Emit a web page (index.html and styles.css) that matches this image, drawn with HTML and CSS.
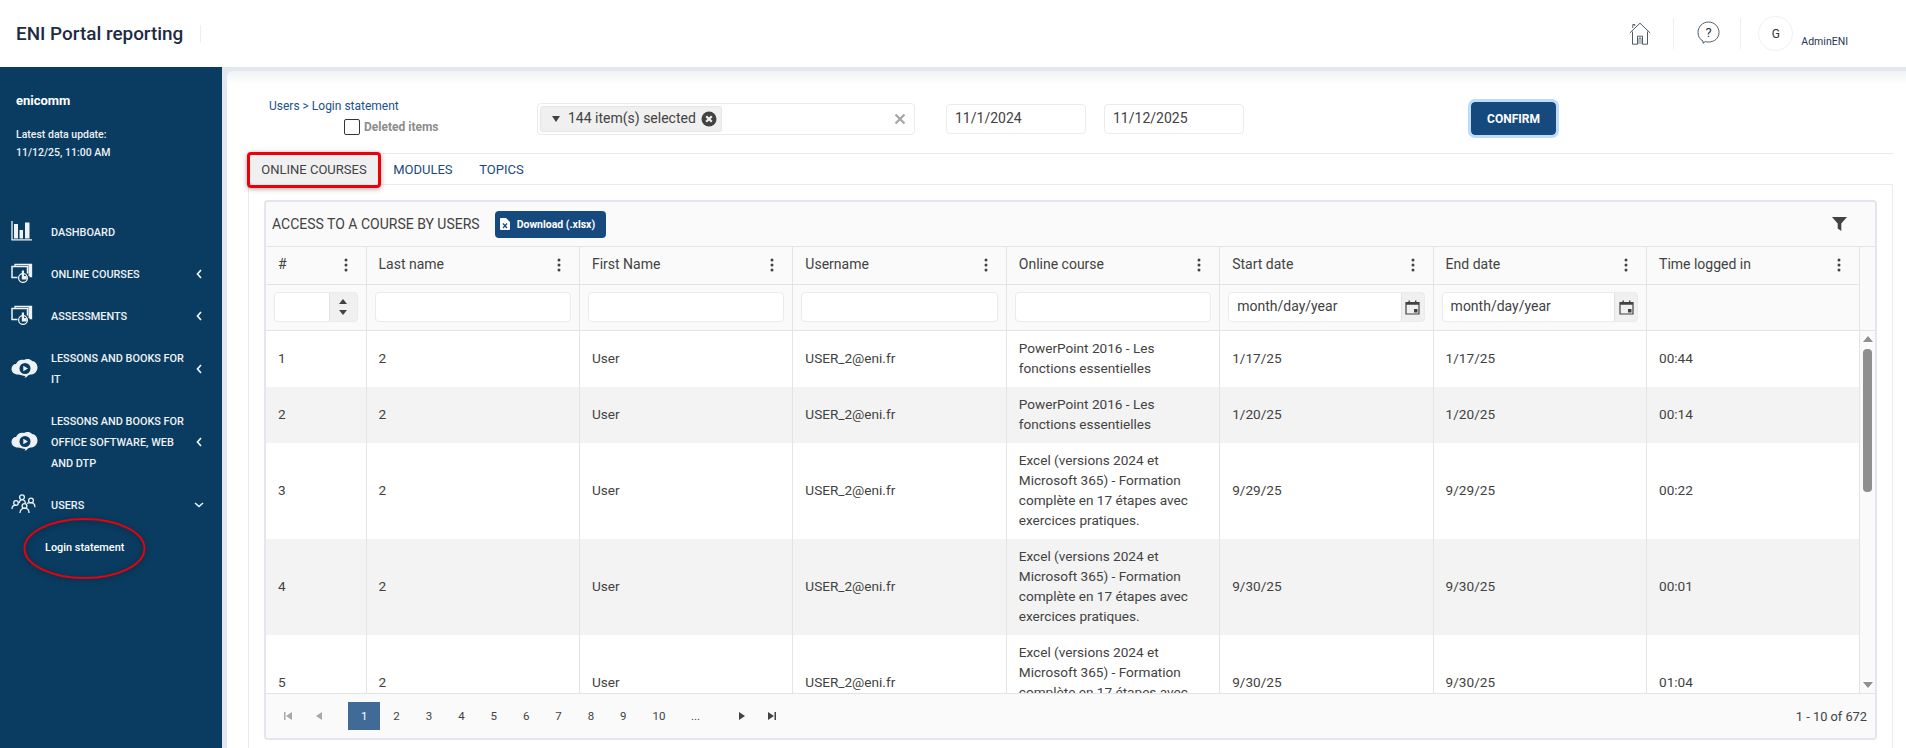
FILE: index.html
```html
<!DOCTYPE html>
<html lang="en">
  <head>
    <meta charset="UTF-8" />
    <title>ENI Portal reporting</title>
    <link rel="stylesheet" href="styles.css">
  </head>
  <body>
    <svg class="defs" width="0" height="0">
      <defs>
        <symbol id="kebab" viewBox="0 0 4 14"><circle cx="2" cy="2" r="1.5"/><circle cx="2" cy="7" r="1.5"/><circle cx="2" cy="12" r="1.5"/></symbol>
        <symbol id="calendar" viewBox="0 0 15 15"><path d="M1 2.500h13v11.500h-13z" fill="none" stroke="currentColor" stroke-width="1.200"/><path d="M1 2.500h13v2.200h-13zM3.500 .5h1.400v3h-1.400zM10 .5h1.400v3h-1.400zM9 9h3.500v3.500H9z"/></symbol>
        <symbol id="chev-left" viewBox="0 0 6 10"><path d="M5 1 1.500 5 5 9" fill="none" stroke="currentColor" stroke-width="1.700"/></symbol>
        <symbol id="course" viewBox="0 0 22 20">
          <path d="M4 3V1.500h16.500v12h-2" fill="none" stroke="currentColor" stroke-width="1.300"/>
          <path d="M17.500 2v11h3V2z" fill="currentColor"/>
          <path d="M6.500 14.500H1v-11h15.500v7" fill="none" stroke="currentColor" stroke-width="1.500"/>
          <circle cx="12" cy="15" r="4.400" fill="#0a3c61" stroke="currentColor" stroke-width="1.300"/>
          <path d="M10.800 7.500h2.200v5.500h2.800v3.500h-5z" fill="currentColor"/>
        </symbol>
        <symbol id="cloud" viewBox="0 0 27 20">
          <path d="M7 16.500C3 16.500 .5 14 .5 11S2.500 6 5 6C6.500 2.500 10 1 13 2c2-1.500 6-1.500 8 1 3 0 5.500 3 5.500 6.500S24 16 20.500 16.500c-1.500 0-3 .5-4 1.500-.5 1-2 1.500-3 1.500l1-1.500C12 18 9 16.500 7 16.500z" fill="currentColor"/>
          <circle cx="14" cy="10.500" r="5.500" fill="#0a3c61"/>
          <path d="M12.300 7.800 17 10.500l-4.700 2.700z" fill="currentColor"/>
        </symbol>
      </defs>
    </svg>

    <header class="topbar">
      <div class="brand">ENI Portal reporting</div>
      <div class="topbar-right">
        <svg class="home-icon" viewBox="0 0 22 23" width="22" height="23">
          <path d="M.8 11 11 1.200 21.200 11M3.500 9.500V22.200h5v-8h5v8h5V9.500M3.800 6V2.500h2V4" fill="none" stroke="#4f5a6c" stroke-width="1"/>
          <path d="M10 22v-6h2v6" fill="none" stroke="#4f5a6c" stroke-width=".8"/>
        </svg>
        <span class="top-divider first"></span>
        <svg class="help-icon" viewBox="0 0 23 23" width="23" height="23">
          <path d="M6 20C2.800 18.500 1 15.300 1 11.500 1 5.700 5.700 1 11.500 1S22 5.700 22 11.500 17.300 21 11.500 21c-1.200 0-2.300-.1-3.300-.4L6 22.300z" fill="none" stroke="#4f5a6c" stroke-width="1"/>
          <text x="11.500" y="15.500" text-anchor="middle">?</text>
        </svg>
        <span class="top-divider second"></span>
        <span class="avatar">G</span>
        <span class="user-name">AdminENI</span>
      </div>
    </header>

    <div class="layout">
      <aside class="sidebar">
        <div class="org">enicomm</div>
        <div class="update">Latest data update:<br>11/12/25, 11:00 AM</div>
        <nav class="nav">
          <a class="nav-item">
            <svg class="nav-icon" viewBox="0 0 22 20" width="22" height="20">
              <path d="M1 0v18.800h20" fill="none" stroke="currentColor" stroke-width="1.300"/>
              <path d="M3 3h4v14.500H3zM8.500 9H12v8.500H8.500zM14 1.500h4.500v16H14z" fill="currentColor"/>
            </svg>
            <span class="nav-label">DASHBOARD</span>
          </a>
          <a class="nav-item">
            <svg class="nav-icon" width="22" height="20"><use href="#course"/></svg>
            <span class="nav-label">ONLINE COURSES</span>
            <svg class="chev" width="6" height="10"><use href="#chev-left"/></svg>
          </a>
          <a class="nav-item">
            <svg class="nav-icon" width="22" height="20"><use href="#course"/></svg>
            <span class="nav-label">ASSESSMENTS</span>
            <svg class="chev" width="6" height="10"><use href="#chev-left"/></svg>
          </a>
          <a class="nav-item">
            <svg class="nav-icon" width="27" height="20"><use href="#cloud"/></svg>
            <span class="nav-label">LESSONS AND BOOKS FOR IT</span>
            <svg class="chev" width="6" height="10"><use href="#chev-left"/></svg>
          </a>
          <a class="nav-item">
            <svg class="nav-icon" width="27" height="20"><use href="#cloud"/></svg>
            <span class="nav-label">LESSONS AND BOOKS FOR OFFICE SOFTWARE, WEB AND DTP</span>
            <svg class="chev" width="6" height="10"><use href="#chev-left"/></svg>
          </a>
          <a class="nav-item">
            <svg class="nav-icon" viewBox="0 0 25 20" width="25" height="20">
              <g fill="none" stroke="currentColor" stroke-width="1.300">
                <circle cx="11" cy="3.200" r="2.400"/><circle cx="5" cy="9" r="2.300"/><circle cx="20" cy="6.500" r="2.400"/><circle cx="13.500" cy="12" r="2.400"/>
                <path d="M1 15c0-2.500 1.500-3.800 4-3.800M8 9c.5-1.800 1.500-3.400 3-3.400s3 1 3.500 3.500M16 9.500c1-.8 2.500-.8 4-.8 2.500 0 3.800 2 4 4.500M9 19c0-3 2-4.800 4.500-4.800S18 16 18 19"/>
              </g>
            </svg>
            <span class="nav-label">USERS</span>
            <svg class="chev down" width="10" height="6" viewBox="0 0 10 6"><path d="M1 1l4 3.500L9 1" fill="none" stroke="currentColor" stroke-width="1.600"/></svg>
          </a>
          <a class="sub-item">Login statement</a>
        </nav>
        <svg class="mark-ellipse" width="125" height="65" viewBox="0 0 125 65">
          <ellipse cx="62.500" cy="32.500" rx="60" ry="29.500"/>
        </svg>
      </aside>

      <div class="main-bg">
        <main class="main">
          <div class="filters">
            <div class="crumb-col">
              <div class="crumb">Users &gt; Login statement</div>
              <label class="deleted"><input type="checkbox" class="check"> Deleted items</label>
            </div>
            <div class="multi">
              <span class="chip">
                <svg class="chip-caret" width="10" height="6" viewBox="0 0 10 6"><path d="M1 0h8L5 6z"/></svg>
                <span class="chip-text">144 item(s) selected</span>
                <svg class="chip-x" width="16" height="16" viewBox="0 0 16 16"><circle cx="8" cy="8" r="7.500"/><path d="M5.200 5.200l5.600 5.600M10.800 5.200l-5.600 5.600"/></svg>
              </span>
              <svg class="multi-x" width="12" height="12" viewBox="0 0 12 12"><path d="M1.500 1.500l9 9M10.500 1.500l-9 9"/></svg>
            </div>
            <input class="date-box first" value="11/1/2024">
            <input class="date-box" value="11/12/2025">
            <button class="confirm">CONFIRM</button>
          </div>

          <div class="tabs">
            <span class="tab active">ONLINE COURSES</span>
            <span class="tab">MODULES</span>
            <span class="tab">TOPICS</span>
            <span class="mark-rect"></span>
          </div>

          <div class="tab-body">
            <section class="grid">
              <div class="toolbar">
                <span class="toolbar-title">ACCESS TO A COURSE BY USERS</span>
                <button class="download">
                  <svg width="10" height="12" viewBox="0 0 10 12"><path d="M0 1a1 1 0 0 1 1-1h5l4 4v7a1 1 0 0 1-1 1H1a1 1 0 0 1-1-1z" fill="#fff"/><path d="M3 5.500l4 4.500M7 5.500l-4 4.500" stroke="#164a7f" stroke-width="1.200"/></svg>
                  Download (.xlsx)
                </button>
                <svg class="funnel" width="15" height="14" viewBox="0 0 15 14"><path d="M0 0h15L9.300 6.500V14L5.700 11.500v-5z"/></svg>
              </div>

              <div class="grid-head">
                <table class="grid-table">
                  <colgroup>
                    <col class="col-num"><col class="col"><col class="col"><col class="col"><col class="col"><col class="col"><col class="col"><col class="col">
                  </colgroup>
                  <tr class="title-row">
                    <th><span>#</span><svg class="kebab" width="4" height="14"><use href="#kebab"/></svg></th>
                    <th><span>Last name</span><svg class="kebab" width="4" height="14"><use href="#kebab"/></svg></th>
                    <th><span>First Name</span><svg class="kebab" width="4" height="14"><use href="#kebab"/></svg></th>
                    <th><span>Username</span><svg class="kebab" width="4" height="14"><use href="#kebab"/></svg></th>
                    <th><span>Online course</span><svg class="kebab" width="4" height="14"><use href="#kebab"/></svg></th>
                    <th><span>Start date</span><svg class="kebab" width="4" height="14"><use href="#kebab"/></svg></th>
                    <th><span>End date</span><svg class="kebab" width="4" height="14"><use href="#kebab"/></svg></th>
                    <th><span>Time logged in</span><svg class="kebab" width="4" height="14"><use href="#kebab"/></svg></th>
                  </tr>
                  <tr class="filter-row">
                    <td>
                      <div class="num-filter">
                        <input class="filter-input">
                        <span class="spin">
                          <svg width="8" height="5" viewBox="0 0 10 6"><path d="M5 0l5 6H0z"/></svg>
                          <svg width="8" height="5" viewBox="0 0 10 6"><path d="M0 0h10L5 6z"/></svg>
                        </span>
                      </div>
                    </td>
                    <td><input class="filter-input"></td>
                    <td><input class="filter-input"></td>
                    <td><input class="filter-input"></td>
                    <td><input class="filter-input"></td>
                    <td>
                      <div class="date-filter">
                        <input class="filter-input" value="month/day/year">
                        <span class="cal"><svg width="15" height="15"><use href="#calendar"/></svg></span>
                      </div>
                    </td>
                    <td>
                      <div class="date-filter">
                        <input class="filter-input" value="month/day/year">
                        <span class="cal"><svg width="15" height="15"><use href="#calendar"/></svg></span>
                      </div>
                    </td>
                    <td></td>
                  </tr>
                </table>
              </div>

              <div class="grid-scroll">
                <div class="grid-body">
                  <table class="grid-table">
                    <colgroup>
                      <col class="col-num"><col class="col"><col class="col"><col class="col"><col class="col"><col class="col"><col class="col"><col class="col">
                    </colgroup>
                    <tr>
                      <td>1</td><td>2</td><td>User</td><td>USER_2@eni.fr</td>
                      <td>PowerPoint 2016 - Les fonctions essentielles</td>
                      <td>1/17/25</td><td>1/17/25</td><td>00:44</td>
                    </tr>
                    <tr class="alt">
                      <td>2</td><td>2</td><td>User</td><td>USER_2@eni.fr</td>
                      <td>PowerPoint 2016 - Les fonctions essentielles</td>
                      <td>1/20/25</td><td>1/20/25</td><td>00:14</td>
                    </tr>
                    <tr>
                      <td>3</td><td>2</td><td>User</td><td>USER_2@eni.fr</td>
                      <td>Excel (versions 2024 et Microsoft 365) - Formation complète en 17 étapes avec exercices pratiques.</td>
                      <td>9/29/25</td><td>9/29/25</td><td>00:22</td>
                    </tr>
                    <tr class="alt">
                      <td>4</td><td>2</td><td>User</td><td>USER_2@eni.fr</td>
                      <td>Excel (versions 2024 et Microsoft 365) - Formation complète en 17 étapes avec exercices pratiques.</td>
                      <td>9/30/25</td><td>9/30/25</td><td>00:01</td>
                    </tr>
                    <tr>
                      <td>5</td><td>2</td><td>User</td><td>USER_2@eni.fr</td>
                      <td>Excel (versions 2024 et Microsoft 365) - Formation complète en 17 étapes avec exercices pratiques.</td>
                      <td>9/30/25</td><td>9/30/25</td><td>01:04</td>
                    </tr>
                  </table>
                </div>
                <div class="scrollbar">
                  <svg width="10" height="6" viewBox="0 0 10 6"><path d="M5 0l5 6H0z"/></svg>
                  <span class="thumb"></span>
                  <svg class="scroll-down" width="10" height="6" viewBox="0 0 10 6"><path d="M0 0h10L5 6z"/></svg>
                </div>
              </div>

              <div class="pager">
                <svg class="pg-icon off" width="8" height="8" viewBox="0 0 8 8"><path d="M0 0h1.500v8H0zM8 0v8L2 4z"/></svg>
                <svg class="pg-icon off prev" width="6" height="8" viewBox="0 0 6 8"><path d="M6 0v8L0 4z"/></svg>
                <span class="page current">1</span>
                <span class="page">2</span>
                <span class="page">3</span>
                <span class="page">4</span>
                <span class="page">5</span>
                <span class="page">6</span>
                <span class="page">7</span>
                <span class="page">8</span>
                <span class="page">9</span>
                <span class="page wide">10</span>
                <span class="page more">...</span>
                <svg class="pg-icon next" width="6" height="8" viewBox="0 0 6 8"><path d="M0 0v8l6-4z"/></svg>
                <svg class="pg-icon last" width="8" height="8" viewBox="0 0 8 8"><path d="M0 0v8l6-4zM6.500 0H8v8H6.500z"/></svg>
                <span class="pager-info">1 - 10 of 672</span>
              </div>
            </section>
          </div>
        </main>
      </div>
    </div>
  </body>
</html>
```

FILE: styles.css
```css
* {
  box-sizing: border-box;
}
html,
body {
  height: 100%;
}
body {
  margin: 0;
  overflow: hidden;
  font-family: Roboto, "Liberation Sans", sans-serif;
  font-size: 13.6px;
  color: #424242;
  background-color: #fff;
}
.defs {
  position: absolute;
}
input,
button {
  font-family: inherit;
}

/* top bar */
.topbar {
  height: 67px;
  display: flex;
  align-items: center;
  justify-content: space-between;
  background-color: #fff;
}
.brand {
  margin-left: 16px;
  padding-right: 17px;
  border-right: 1px solid #eceef2;
  font-size: 18.9px;
  font-weight: 500;
  line-height: 18px;
  color: #1f2a44;
}
.topbar-right {
  display: flex;
  align-items: center;
  margin-right: 58px;
}
.home-icon {
  margin-top: -1px;
  margin-left: -1px;
}
.help-icon {
  margin-top: -3px;
}
.help-icon text {
  font-size: 13px;
  font-family: Roboto, sans-serif;
  fill: #333;
}
.top-divider {
  width: 1px;
  height: 31px;
  background-color: #eceef2;
}
.top-divider.first {
  margin: 0 23px 0 22px;
}
.top-divider.second {
  margin: 0 17px 0 20px;
}
.avatar {
  width: 35px;
  height: 35px;
  border: 1px solid #eef0f6;
  border-radius: 50%;
  display: flex;
  align-items: center;
  justify-content: center;
  font-size: 12px;
  color: #333;
}
.user-name {
  margin: 15px 0 0 8px;
  font-size: 10.5px;
  color: #2a3558;
}

/* layout */
.layout {
  display: flex;
  height: calc(100% - 67px);
}
.sidebar {
  position: relative;
  width: 222px;
  flex-shrink: 0;
  padding-top: 26px;
  background-color: #0a3c61;
  color: #eef2f6;
}
.org {
  margin-left: 16px;
  font-size: 13px;
  font-weight: 700;
  line-height: 16px;
  color: #fff;
}
.update {
  margin: 17px 0 0 16px;
  font-size: 10.5px;
  font-weight: 500;
  line-height: 18px;
}
.nav {
  margin-top: 49px;
}
.nav-item {
  position: relative;
  display: flex;
  align-items: center;
  padding: 10.5px 0 10.5px 51px;
  font-size: 10.9px;
  font-weight: 500;
  line-height: 21px;
}
.nav-icon {
  position: absolute;
  left: 11px;
  top: 50%;
  margin-top: -11px;
}
.nav-label {
  width: 140px;
}
.chev {
  position: absolute;
  left: 196px;
  top: 50%;
  margin-top: -5px;
}
.chev.down {
  left: 194px;
  margin-top: -3px;
}
.sub-item {
  display: block;
  padding-left: 45px;
  font-size: 10.9px;
  font-weight: 500;
  line-height: 44px;
  color: #fff;
}
.mark-ellipse {
  position: absolute;
  left: 22px;
  top: 449px;
  overflow: visible;
  filter: drop-shadow(0 1px 3px rgba(0, 0, 0, 0.45));
}
.mark-ellipse ellipse {
  fill: none;
  stroke: #e8000a;
  stroke-width: 2;
}

/* main area */
.main-bg {
  flex: 1;
  min-width: 0;
  padding: 4px 0 0 5px;
  background-color: #e2e6ef;
}
.main {
  height: 100%;
  padding: 0 13px 0 21px;
  border-top-left-radius: 6px;
  background: linear-gradient(#f1f2f5, #fff 14px);
}
.filters {
  height: 82px;
  display: flex;
  align-items: flex-start;
  padding-left: 21px;
}
.crumb-col {
  width: 268px;
  padding-top: 28px;
}
.crumb {
  font-size: 12px;
  line-height: 14px;
  color: #1a5190;
}
.deleted {
  display: flex;
  align-items: center;
  gap: 4px;
  margin: 6px 0 0 75px;
  font-size: 12px;
  font-weight: 700;
  color: #8c8c8c;
}
.check {
  appearance: none;
  width: 16px;
  height: 16px;
  margin: 0;
  border: 1px solid #333;
  border-radius: 2px;
  background-color: #fff;
}
.multi {
  width: 378px;
  height: 32px;
  margin-top: 32px;
  padding: 2px;
  display: flex;
  align-items: center;
  justify-content: space-between;
  border: 1px solid #ebebeb;
  border-radius: 4px;
}
.chip {
  height: 26px;
  display: flex;
  align-items: center;
  gap: 5px;
  padding: 0 4px 0 10px;
  border: 1px solid #e6e6e6;
  border-radius: 3px;
  background-color: #f0f0f0;
  font-size: 14px;
  color: #424242;
}
.chip-caret {
  fill: #424242;
  margin-right: 2px;
}
.chip-text {
  padding-bottom: 2px;
}
.chip-x circle {
  fill: #424242;
}
.chip-x path {
  stroke: #f0f0f0;
  stroke-width: 2.2;
}
.multi-x {
  margin-right: 6px;
}
.multi-x path {
  stroke: #a8a8a8;
  stroke-width: 2.4;
}
.date-box {
  width: 140px;
  height: 30px;
  margin: 33px 0 0 18px;
  padding: 0 8px 2px;
  border: 1px solid #ebebeb;
  border-radius: 4px;
  font-size: 14px;
  color: #424242;
}
.date-box.first {
  margin-left: 31px;
}
.confirm {
  width: 85px;
  height: 33px;
  margin: 31px 0 0 227px;
  border: none;
  border-radius: 4px;
  outline: 3px solid #bcdcf9;
  background-color: #164a7f;
  color: #fff;
  font-size: 12px;
  font-weight: 700;
}

/* tabs */
.tabs {
  position: relative;
  height: 32px;
  display: flex;
  align-items: center;
  border-top: 1px solid #ebebeb;
  border-bottom: 1px solid #ebebeb;
}
.tab {
  height: 100%;
  padding: 0 13.300px;
  display: flex;
  align-items: center;
  font-size: 13px;
  color: #1a4a7e;
}
.tab.active {
  background-color: #f0f0f0;
  color: #424242;
}
.mark-rect {
  position: absolute;
  left: -1px;
  top: -2px;
  width: 134px;
  height: 36px;
  border: 3px solid #ef0008;
  border-radius: 4px;
  box-shadow: 0 1px 5px rgba(0, 0, 0, 0.35);
}
.tab-body {
  height: 564px;
  padding: 15px 15px 0;
  border-left: 1px solid #ebebeb;
  border-right: 1px solid #ebebeb;
}

/* grid */
.grid {
  height: 540px;
  display: flex;
  flex-direction: column;
  border: 2px solid #e3e6ee;
  border-radius: 4px;
  background-color: #fafafa;
}
.toolbar {
  height: 44px;
  flex-shrink: 0;
  display: flex;
  align-items: center;
  padding-left: 6px;
}
.toolbar-title {
  font-size: 14px;
}
.download {
  height: 27px;
  margin-left: 15px;
  padding: 0 11px 0 5px;
  display: flex;
  align-items: center;
  gap: 7px;
  border: none;
  border-radius: 4px;
  background-color: #164a7f;
  color: #fff;
  font-size: 10.5px;
  font-weight: 700;
}
.funnel {
  margin-left: auto;
  margin-right: 28px;
  fill: #424242;
}
.grid-table {
  width: 1594px;
  border-collapse: collapse;
  table-layout: fixed;
}
.col-num {
  width: 100px;
}
.col {
  width: 213.430px;
}
.grid-table td,
.grid-table th {
  border-left: 1px solid #e4e4e4;
  padding: 7px 12px 9px;
  font-weight: 400;
  line-height: 20px;
  text-align: left;
  vertical-align: middle;
}
.grid-table td:first-child,
.grid-table th:first-child {
  border-left: none;
}
.grid-table td:last-child,
.grid-table th:last-child {
  border-right: 1px solid #e4e4e4;
}
.grid-head {
  flex-shrink: 0;
  border-top: 1px solid #e4e4e4;
  border-bottom: 1px solid #e4e4e4;
}
.title-row th {
  height: 37px;
  padding-top: 0;
  padding-bottom: 2px;
  border-bottom: 1px solid #e4e4e4;
  font-size: 14px;
  position: relative;
}
.kebab {
  position: absolute;
  right: 18px;
  top: 11px;
  fill: #424242;
}
.filter-row td {
  height: 46px;
  padding: 0 8px;
}
.filter-input {
  width: 100%;
  height: 30px;
  padding: 0 8px 2px;
  border: 1px solid #ebebeb;
  border-radius: 4px;
  background-color: #fff;
  font-size: 14px;
  color: #424242;
}
.num-filter,
.date-filter {
  display: flex;
  border: 1px solid #ebebeb;
  border-radius: 4px;
  height: 30px;
  overflow: hidden;
  background-color: #f0f0f0;
}
.num-filter .filter-input,
.date-filter .filter-input {
  flex: 1;
  min-width: 0;
  height: 28px;
  border: none;
  border-radius: 0;
}
.spin {
  width: 28px;
  display: flex;
  flex-direction: column;
  align-items: center;
  justify-content: space-evenly;
  fill: #424242;
  border-left: 1px solid #e4e4e4;
}
.cal {
  width: 23px;
  display: flex;
  align-items: center;
  justify-content: center;
  border-left: 1px solid #e4e4e4;
  color: #424242;
  fill: #424242;
}
.grid-scroll {
  position: relative;
  height: 362px;
  flex-shrink: 0;
  overflow: hidden;
  background-color: #fff;
}
.alt {
  background-color: #f3f3f3;
}
.scrollbar {
  position: absolute;
  top: 0;
  right: 0;
  bottom: 0;
  width: 15px;
  padding-top: 5px;
  display: flex;
  flex-direction: column;
  align-items: center;
  background-color: #fafafa;
  fill: #8f8f8f;
}
.thumb {
  width: 9px;
  height: 143px;
  margin-top: 7px;
  border-radius: 4px;
  background-color: #8f8f8f;
}
.scroll-down {
  margin-top: auto;
  margin-bottom: 5px;
}

/* pager */
.pager {
  flex: 1;
  display: flex;
  align-items: center;
  border-top: 1px solid #e4e4e4;
  padding-left: 17.500px;
  font-size: 11.5px;
}
.pg-icon {
  fill: #424242;
}
.pg-icon.off {
  fill: #a8a8a8;
}
.pg-icon.prev {
  margin-left: 24.500px;
  margin-right: 26px;
}
.pg-icon.next {
  margin-left: 26px;
}
.pg-icon.last {
  margin-left: 23px;
}
.page {
  width: 32.400px;
  height: 28px;
  display: flex;
  align-items: center;
  justify-content: center;
}
.page.wide {
  width: 39px;
}
.page.more {
  width: 34px;
}
.page.current {
  background-color: #3f6b96;
  color: #fff;
}
.pager-info {
  margin-left: auto;
  margin-right: 8px;
  font-size: 12.8px;
}
```
